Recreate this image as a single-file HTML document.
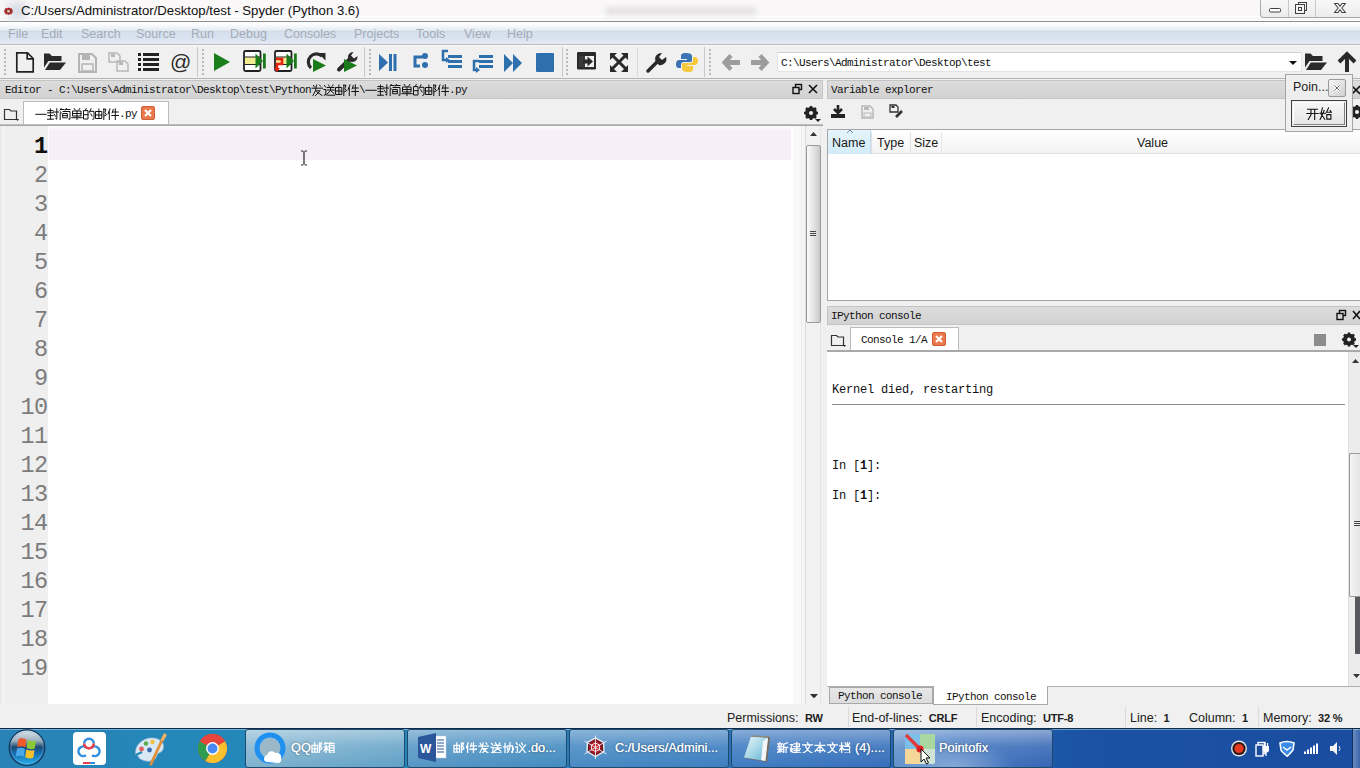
<!DOCTYPE html>
<html><head><meta charset="utf-8">
<style>
*{margin:0;padding:0;box-sizing:border-box}
html,body{width:1360px;height:768px;overflow:hidden;background:#f0f0f0;font-family:"Liberation Sans",sans-serif;position:relative}
.a{position:absolute}
.mono{font-family:"Liberation Mono",monospace}
.serif{font-family:"Liberation Serif",serif}
.nw{white-space:nowrap}
.ln{position:absolute;left:0;width:47.5px;margin-top:1px;text-align:right;font-family:"Liberation Mono",monospace;font-size:23.5px;letter-spacing:-0.6px;color:#7c7c7c;line-height:29px}
.dt{line-height:14px;font-family:"Liberation Mono",monospace;font-size:11px;letter-spacing:-0.6px;color:#101010;white-space:nowrap}
.cj{display:inline-block;font-size:12px;letter-spacing:0;vertical-align:top;overflow:hidden;height:14px;line-height:14px;white-space:nowrap}
.grip{position:absolute;width:2px;background:repeating-linear-gradient(#b9b9b9 0 2px,transparent 2px 4px)}
.sep{position:absolute;width:1px;background:#c8c8c8;top:47px;height:30px}
.st{position:absolute;top:711px;font-size:12.5px;color:#202020;white-space:nowrap}
.st b{font-weight:bold;margin-left:3px;font-size:11px;letter-spacing:-0.2px}
.tb{position:absolute;top:729px;height:39px;border:1px solid #1e4a6e;border-radius:3px;background:linear-gradient(180deg,rgba(255,255,255,.45),rgba(255,255,255,.12) 50%,rgba(255,255,255,.05));}
.tbt{position:absolute;top:740px;font-size:12.8px;color:#fff;white-space:nowrap;text-shadow:0 0 3px rgba(0,0,0,.45),0 0 .4px #fff}
</style></head><body>
<svg width="0" height="0" style="position:absolute;left:0;top:0"><defs><symbol id="g21457" viewBox="0 0 12 12"><path d="M2.5 1.5L3.5 3 M8.5 1L9.5 2.2 M1 4.2H11.5 M5.5 1L4.5 6.5L2 11.5 M4.8 6.8H9.2L4.5 11.5 M5.8 7.8L11 11.5"/></symbol><symbol id="g36865" viewBox="0 0 12 12"><path d="M1.5 1.5L2.5 3 M0.8 5.5H2.8V10L1 11.5 M2.5 10.8C5 11.3 8 11.3 11.5 11.3 M5.5 1L6.3 2.3 M10 1L9.2 2.3 M4.2 3.5H11 M4.2 6H11.3 M7.6 3.5V6.5L4.3 9.8 M7.6 6.5L11 9.5"/></symbol><symbol id="g37038" viewBox="0 0 12 12"><path d="M1 3.5H6.8V10.5H1Z M1 7H6.8 M3.9 1V10.5 M8.8 1V11.8 M8.8 1.2H11L9.9 4.5L11.5 6.8L9.5 7.8"/></symbol><symbol id="g20214" viewBox="0 0 12 12"><path d="M3 0.8L1 5.8 M2.3 3.8V11.8 M6.2 1.5L5.2 4.8 M5.6 4H11.2 M4.8 7.5H11.7 M8.3 0.8V11.8"/></symbol><symbol id="g19968" viewBox="0 0 12 12"><path d="M0.8 6.3H11.2"/></symbol><symbol id="g23553" viewBox="0 0 12 12"><path d="M0.8 2.6H6 M3.4 1V4.8 M0.6 4.8H6.2 M1 7.6H6 M3.4 6V11 M0.4 11.2H6.4 M6.4 4H11.6 M9.8 0.8V11.2L8.8 10.6 M7.3 6.3L8.5 8.3"/></symbol><symbol id="g31616" viewBox="0 0 12 12"><path d="M2.2 0.4L1 2.2 M1.8 1.5H5 M7.4 0.4L6.2 2.2 M7 1.5H11 M1.5 3.8L2.2 5 M1.2 5V11.8 M4 3.5H11V11.3L9.8 11 M4.2 5.5H8.3V9.8H4.2Z M4.2 7.6H8.3"/></symbol><symbol id="g21333" viewBox="0 0 12 12"><path d="M3.2 0.5L4.2 2 M8.8 0.5L7.8 2 M2 3H10V8H2Z M2 5.5H10 M6 3V11.8 M0.8 9.7H11.2"/></symbol><symbol id="g30340" viewBox="0 0 12 12"><path d="M3.2 0.5L2.5 2.3 M1 2.6H5V11H1Z M1 6.7H5 M8 0.8L6.5 4.2 M7 3.3H11V10.8L9.8 11.3 M7.8 5.8L9 8"/></symbol><symbol id="g24320" viewBox="0 0 12 12"><path d="M1.5 2H10.5 M0.8 6H11.2 M4.6 2V7.2L2 11.7 M8 2V11.7"/></symbol><symbol id="g22987" viewBox="0 0 12 12"><path d="M3.2 0.8L1.8 6.2L5.3 11.3 M0.8 5.8H6 M4.8 3.2L1 11.5 M8.8 0.8L7 4.8H11.3L10.3 3.3 M7.2 7H11V11.2H7.2Z"/></symbol><symbol id="g31665" viewBox="0 0 12 12"><path d="M2.2 0.4L1 2.2 M1.8 1.5H5 M7.4 0.4L6.2 2.2 M7 1.5H11 M0.5 5H5 M2.8 3.3V11.8 M2.8 5.6L0.5 9.5 M2.8 5.6L5 8.5 M6.3 3.6H11V11.5H6.3Z M6.3 6.2H11 M6.3 8.8H11"/></symbol><symbol id="g21327" viewBox="0 0 12 12"><path d="M0.5 5H4.3 M2.5 1.5V11.8 M5 4H10.3V10.8L9 10.3 M7.8 0.8L7.3 7L5 11 M5.6 6L5 8.2 M11 6L11.7 8.2"/></symbol><symbol id="g35758" viewBox="0 0 12 12"><path d="M1.2 0.9L2.4 2.5 M0.5 5H2.5V10L1 11.5 M6.8 1L7.8 3 M4.5 3L11.2 11.5 M10.8 3L4 11.5"/></symbol><symbol id="g26032" viewBox="0 0 12 12"><path d="M3 0.3V1.5 M0.8 2H5.6 M1.8 3L2.4 4.5 M4.6 3L4 4.5 M0.4 5H6 M1 7.5H5.6 M3 5V11.8 M3 8L0.6 11 M3 8L5.4 10 M11 0.8L7 2.3V10.8L6.4 11.8 M7 5.5H11.6 M9.4 5.5V11.8"/></symbol><symbol id="g24314" viewBox="0 0 12 12"><path d="M5 2H10.3V4.8H4.6 M4.4 7H11.2 M5 9H10.4 M7.6 0.4V10.4 M0.8 2.8H3.2L1 7H3.5L1.6 10 M1.3 8.2C2.5 10.8 4 11.3 11.6 11.3"/></symbol><symbol id="g25991" viewBox="0 0 12 12"><path d="M5.8 0.4L6.6 2 M0.8 3H11.2 M3.4 3C4.6 7 7 9.8 11.2 11.6 M8.6 3C7.4 7 5 9.8 0.8 11.6"/></symbol><symbol id="g26412" viewBox="0 0 12 12"><path d="M0.8 3.6H11.2 M6 0.4V11.8 M6 3.8L0.8 9.8 M6 3.8L11.2 9.8 M3.4 8.8H8.6"/></symbol><symbol id="g26723" viewBox="0 0 12 12"><path d="M0.4 4H5 M2.8 0.8V11.8 M2.8 5L0.4 9 M2.8 5L5 8 M6.4 1L7.4 3 M11 1L10 3 M8.8 0.4V4 M6 4.6H11V11.4H6 M6 8H11"/></symbol></defs></svg>

<!-- ============ TITLE BAR ============ -->
<div class="a" style="left:0;top:0;width:1360px;height:22px;background:linear-gradient(#faf8f8 0,#f9f7f7 15px,#fdfdfd 16px,#fdfdfd 17px,#f6f5f5 18px,#fbfbfb 20px);border-bottom:1px solid #8e8e8e"></div>
<div class="a" style="left:606px;top:7px;width:150px;height:8px;background:#e4e2e2;filter:blur(2.5px)"></div>
<div class="a" style="left:8px;top:2px;width:18px;height:18px;background:#d8dde6;filter:blur(4px)"></div>
<svg class="a" style="left:3px;top:6px" width="11" height="10" viewBox="0 0 11 10"><ellipse cx="5.5" cy="5.2" rx="4.2" ry="3.4" fill="#c23a3a"/><path d="M1.5 5.2H9.5M5.5 1.8V8.6M2.5 3L8.5 7.4M2.5 7.4L8.5 3" stroke="#6a2020" stroke-width=".8"/><circle cx="5.5" cy="5.2" r="1.3" fill="#f0d0d0"/></svg>
<div class="a nw" style="left:21px;top:3px;font-size:13.2px;color:#111">C:/Users/Administrator/Desktop/test - Spyder (Python 3.6)</div>
<!-- window buttons -->
<div class="a" style="left:1260px;top:-1px;width:101px;height:19px;border:1px solid #a8a8a8;border-top:none;border-radius:0 0 0 4px;background:linear-gradient(#f8f8f8,#ececec)"></div>
<div class="a" style="left:1288px;top:0;width:1px;height:17px;background:#c8c8c8"></div>
<div class="a" style="left:1315px;top:0;width:1px;height:17px;background:#c8c8c8"></div>
<svg class="a" style="left:1262px;top:0" width="98" height="18" viewBox="0 0 98 18">
 <rect x="7.5" y="8.5" width="11" height="3.5" rx="1" fill="#fff" stroke="#404040" stroke-width="1"/>
 <rect x="36.5" y="2.5" width="8" height="8" fill="none" stroke="#404040"/>
 <rect x="33.5" y="4.5" width="9" height="9" fill="#f4f4f4" stroke="#404040"/>
 <rect x="36.5" y="7.5" width="3" height="3" fill="none" stroke="#404040"/>
 <path d="M72.5 3.5H76L78 6.3L80 3.5H83.5L79.8 8L83.5 12.5H80L78 9.7L76 12.5H72.5L76.2 8Z" fill="#f6f6f6" stroke="#404040" stroke-width="1.1" stroke-linejoin="round"/>
</svg>

<!-- ============ MENU BAR ============ -->
<div class="a" style="left:0;top:22px;width:1360px;height:23px;background:linear-gradient(#fdfeff 0,#f9fbfd 3px,#e7ecf2 8px,#d2dbe6 9.5px,#d6e0ee 10.5px,#dae3f0 17px,#e4e7f1 20px,#e6e8f2 22px);border-bottom:1px solid #b6bcc8"></div>
<div class="a nw" style="left:8px;top:27px;font-size:12.5px;color:#a4abb7;word-spacing:0">
<span class="a" style="left:0">File</span><span class="a" style="left:33px">Edit</span><span class="a" style="left:73px">Search</span><span class="a" style="left:128px">Source</span><span class="a" style="left:183px">Run</span><span class="a" style="left:222px">Debug</span><span class="a" style="left:276px">Consoles</span><span class="a" style="left:346px">Projects</span><span class="a" style="left:408px">Tools</span><span class="a" style="left:456px">View</span><span class="a" style="left:499px">Help</span>
</div>

<!-- ============ TOOLBAR ============ -->
<div class="a" style="left:0;top:45px;width:1360px;height:34px;background:linear-gradient(#fbfbfb 0,#f0f0f0 2px);border-bottom:1px solid #b4b4b4"></div>
<div class="grip" style="left:4px;top:49px;height:26px"></div>
<div class="sep" style="left:197px"></div>
<div class="grip" style="left:202px;top:49px;height:26px"></div>
<div class="sep" style="left:364px"></div>
<div class="grip" style="left:369px;top:49px;height:26px"></div>
<div class="sep" style="left:562px"></div>
<div class="grip" style="left:566px;top:49px;height:26px"></div>
<div class="sep" style="left:637px;background:#dadada"></div>
<div class="sep" style="left:704px"></div>
<div class="grip" style="left:709px;top:49px;height:26px"></div>
<!-- ICONS -->
<svg class="a" style="left:0;top:45px" width="1360" height="34" viewBox="0 45 1360 34">
 <!-- new -->
 <path d="M16.8 52.8H27.5L33.2 58.5V71.8H16.8Z" fill="none" stroke="#222" stroke-width="1.7"/>
 <path d="M27.2 53V58.8H33" fill="none" stroke="#222" stroke-width="1.7"/>
 <!-- open -->
 <path d="M44 53.5H49.5L52 56H61.5V61H48.5L44 67.5Z" fill="#2a2a2a"/>
 <path d="M49.8 62.5H66L60 70H45Z" fill="#2a2a2a"/>
 <!-- save gray -->
 <path d="M79 54H92L96 58V72H79Z" fill="none" stroke="#b4b4b4" stroke-width="2"/>
 <rect x="82" y="55" width="8" height="5" fill="#b4b4b4"/>
 <rect x="82" y="64" width="11" height="7" fill="none" stroke="#b4b4b4" stroke-width="1.5"/>
 <!-- save all gray -->
 <path d="M109 53H117L120 56V62H109Z" fill="none" stroke="#b8b8b8" stroke-width="1.5"/>
 <path d="M117 61H125L128 64V71H117Z" fill="none" stroke="#b8b8b8" stroke-width="1.5"/>
 <rect x="111" y="54" width="4" height="3" fill="#b8b8b8"/><rect x="119" y="62" width="4" height="3" fill="#b8b8b8"/>
 <!-- list -->
 <rect x="138" y="53" width="3" height="3" fill="#222"/><rect x="143" y="53" width="16" height="3" fill="#222"/>
 <rect x="138" y="58" width="3" height="3" fill="#222"/><rect x="143" y="58" width="16" height="3" fill="#222"/>
 <rect x="138" y="63" width="3" height="3" fill="#222"/><rect x="143" y="63" width="16" height="3" fill="#222"/>
 <rect x="138" y="68" width="3" height="3" fill="#222"/><rect x="143" y="68" width="16" height="3" fill="#222"/>
 <!-- @ -->
 <text x="170" y="69" font-family="Liberation Sans" font-size="21" fill="#2a2a2a">@</text>
 <!-- run -->
 <path d="M214 53L230 62L214 71Z" fill="#1a7f1a"/>
 <!-- run cell -->
 <rect x="244" y="51" width="16.5" height="20" rx="1.5" fill="#fff" stroke="#222" stroke-width="1.8"/>
 <rect x="245" y="57" width="14" height="7.5" fill="#f2ec90"/>
 <path d="M245 57H260M245 64.5H260" stroke="#222" stroke-width="1.2"/>
 <path d="M255.5 53.5L263 61L255.5 68.5Z" fill="#1a7a1a"/><rect x="263" y="53.5" width="2.8" height="15" fill="#1a7a1a"/>
 <!-- run cell advance -->
 <rect x="275" y="51" width="16.5" height="20" rx="1.5" fill="#fff" stroke="#222" stroke-width="1.8"/>
 <rect x="276" y="57" width="14" height="7.5" fill="#f2ec90"/>
 <path d="M276 57H291M276 64.5H291" stroke="#222" stroke-width="1.2"/>
 <path d="M276 59H282V64H277V70" fill="none" stroke="#e82010" stroke-width="2.6"/><path d="M274 68L277 72L280 68Z" fill="#e82010"/>
 <path d="M286.5 53.5L294 61L286.5 68.5Z" fill="#1a7a1a"/><rect x="294" y="53.5" width="2.8" height="15" fill="#1a7a1a"/>
 <!-- rerun -->
 <path d="M322 56A8 8 0 1 0 311 68" fill="none" stroke="#2a2a2a" stroke-width="3.2"/>
 <path d="M318 53H325.5V60.5Z" fill="#2a2a2a"/>
 <path d="M313 59L326 65.5L313 72Z" fill="#1a7a1a"/>
 <!-- config run -->
 <path d="M339 69.5L350 59" stroke="#2a2a2a" stroke-width="4" stroke-linecap="round"/>
 <path d="M348 59A5.5 5.5 0 0 1 353.5 52L351 55.5L354 58.5L357.5 56A5.5 5.5 0 0 1 351 62Z" fill="#2a2a2a"/>
 <path d="M344 59L357 65.5L344 72Z" fill="#1a7a1a"/>
 <!-- debug -->
 <path d="M379 54L388 62.5L379 71Z" fill="#2e6fad"/><rect x="389" y="54" width="3" height="17" fill="#2e6fad"/><rect x="393.5" y="54" width="3" height="17" fill="#2e6fad"/>
 <!-- step -->
 <path d="M423 57H415V66H420" fill="none" stroke="#2e6fad" stroke-width="3"/>
 <circle cx="425" cy="56" r="3" fill="#2e6fad"/><circle cx="425" cy="65" r="3" fill="#2e6fad"/>
 <!-- step into -->
 <path d="M448 51H443V60H447" fill="none" stroke="#2e6fad" stroke-width="2.5"/><path d="M446 57L450 60L446 63Z" fill="#2e6fad"/>
 <rect x="448" y="55" width="14" height="3" fill="#2e6fad"/><rect x="448" y="60" width="14" height="3" fill="#2e6fad"/><rect x="448" y="65" width="14" height="3" fill="#2e6fad"/>
 <!-- step return -->
 <rect x="479" y="55" width="14" height="3" fill="#2e6fad"/><rect x="479" y="60" width="14" height="3" fill="#2e6fad"/><rect x="479" y="65" width="14" height="3" fill="#2e6fad"/>
 <path d="M479 61H474V70H477" fill="none" stroke="#2e6fad" stroke-width="2.5"/><path d="M476 67L480 70L476 73Z" fill="#2e6fad"/>
 <!-- continue -->
 <path d="M504 54L513 63L504 72Z M513 54L522 63L513 72Z" fill="#2e6fad"/>
 <!-- stop -->
 <rect x="536" y="53" width="18" height="19" rx="1" fill="#2e6fad"/>
 <!-- maximize pane -->
 <rect x="577" y="52" width="19" height="17.5" rx="1.2" fill="#2a2a2a"/>
 <rect x="579" y="56" width="15" height="11" fill="#f0f0f0"/>
 <rect x="579" y="56" width="6" height="11" fill="#3a3a3a"/>
 <path d="M583 59.5H587.5V56.5L593 61.5L587.5 66.5V63.5H583Z" fill="#2a2a2a"/>
 <!-- fullscreen -->
 <path d="M612 55L626 69M626 55L612 69" stroke="#2a2a2a" stroke-width="3"/>
 <path d="M610 53H617L610 60Z M628 53H621L628 60Z M610 72H617L610 65Z M628 72H621L628 65Z" fill="#2a2a2a"/>
 <!-- wrench -->
 <path d="M648 71L658 61" stroke="#2a2a2a" stroke-width="3.5" stroke-linecap="round"/>
 <path d="M656 62A6 6 0 0 1 662 53L659 57L662 60L666 57A6 6 0 0 1 659 65Z" fill="#2a2a2a"/>
 <!-- python -->
 <path d="M686 53C681 53 681 55 681 57V59H687V60H679C677 60 676 62 676 64C676 67 677 68 679 68H681V65C681 63 682 62 684 62H690C692 62 692 61 692 59V56C692 54 690 53 686 53Z" fill="#3a74b4"/>
 <path d="M688 72C693 72 693 70 693 68V66H687V65H695C697 65 698 63 698 61C698 58 697 57 695 57H693V60C693 62 692 63 690 63H684C682 63 682 64 682 66V69C682 71 684 72 688 72Z" fill="#f5c93a"/>
 <!-- back/forward -->
 <path d="M731 55.5L724.5 62.5L731 69.5" fill="none" stroke="#9c9c9c" stroke-width="4.2" stroke-linejoin="miter"/><rect x="726" y="60" width="14" height="5" fill="#9c9c9c"/>
 <path d="M760 55.5L766.5 62.5L760 69.5" fill="none" stroke="#9c9c9c" stroke-width="4.2" stroke-linejoin="miter"/><rect x="751" y="60" width="14" height="5" fill="#9c9c9c"/>
 <!-- folder open right -->
 <path d="M1305 53.5H1310.5L1313 56H1322.5V61H1309.5L1305 67.5Z" fill="#2a2a2a"/>
 <path d="M1310.8 62.5H1327L1321 70H1306Z" fill="#2a2a2a"/>
 <!-- up -->
 <path d="M1347 72V56M1339 62L1347 54L1355 62" stroke="#2a2a2a" stroke-width="4" fill="none"/>
</svg>
<!-- path combo -->
<div class="a" style="left:777px;top:52px;width:525px;height:20px;background:#fff;border:1px solid #e4e4e4;border-top-color:#cfcfcf"></div>
<div class="a dt" style="left:781px;top:56px;font-size:11px">C:\Users\Administrator\Desktop\test</div>
<svg class="a" style="left:1288px;top:60px" width="10" height="6"><path d="M1 1H9L5 5Z" fill="#111"/></svg>

<!-- ============ LEFT DOCK: EDITOR ============ -->
<div class="a" style="left:0;top:80px;width:823px;height:19px;background:linear-gradient(#dcdcdc,#d2d2d2);border:1px solid #c4c4c4;border-left:none"></div>
<div class="a dt" style="left:5px;top:83px">Editor - C:\Users\Administrator\Desktop\test\Python<svg width="48" height="12" style="display:inline-block;vertical-align:top;position:relative;top:0.5px" fill="none" stroke="#111" stroke-width="1" stroke-linecap="square"><use href="#g21457" x="0" y="0" width="12" height="12"/><use href="#g36865" x="12" y="0" width="12" height="12"/><use href="#g37038" x="24" y="0" width="12" height="12"/><use href="#g20214" x="36" y="0" width="12" height="12"/></svg>\<svg width="84" height="12" style="display:inline-block;vertical-align:top;position:relative;top:0.5px" fill="none" stroke="#111" stroke-width="1" stroke-linecap="square"><use href="#g19968" x="0" y="0" width="12" height="12"/><use href="#g23553" x="12" y="0" width="12" height="12"/><use href="#g31616" x="24" y="0" width="12" height="12"/><use href="#g21333" x="36" y="0" width="12" height="12"/><use href="#g30340" x="48" y="0" width="12" height="12"/><use href="#g37038" x="60" y="0" width="12" height="12"/><use href="#g20214" x="72" y="0" width="12" height="12"/></svg>.py</div>
<svg class="a" style="left:792px;top:83px" width="26" height="13" viewBox="0 0 26 13">
 <rect x="3.5" y="1.5" width="6" height="5" fill="none" stroke="#111" stroke-width="1.4"/>
 <rect x="1" y="4.5" width="6" height="6" fill="#d6d6d6" stroke="#111" stroke-width="1.4"/>
 <path d="M17 2L25 10M25 2L17 10" stroke="#111" stroke-width="1.6"/>
</svg>
<!-- tab bar -->
<div class="a" style="left:0;top:99px;width:823px;height:27px;background:#f0f0f0"></div>
<svg class="a" style="left:3px;top:106px" width="17" height="17" viewBox="0 0 17 17"><path d="M1.5 3.5H6.5L8 5H13.5V13.5H1.5Z" fill="none" stroke="#333" stroke-width="1.2"/><path d="M13 13L16 13L14.5 15Z" fill="#222"/></svg>
<div class="a" style="left:23px;top:101px;width:146px;height:25px;background:#fff;border:1px solid #bcbcbc;border-bottom:none"></div>
<div class="a dt" style="left:35px;top:107px"><svg width="84" height="12" style="display:inline-block;vertical-align:top;position:relative;top:1px" fill="none" stroke="#111" stroke-width="1" stroke-linecap="square"><use href="#g19968" x="0" y="0" width="12" height="12"/><use href="#g23553" x="12" y="0" width="12" height="12"/><use href="#g31616" x="24" y="0" width="12" height="12"/><use href="#g21333" x="36" y="0" width="12" height="12"/><use href="#g30340" x="48" y="0" width="12" height="12"/><use href="#g37038" x="60" y="0" width="12" height="12"/><use href="#g20214" x="72" y="0" width="12" height="12"/></svg>.py</div>
<div class="a" style="left:141px;top:106px;width:14px;height:14px;background:#e97a4d;border:1px solid #cf5e33;border-radius:2px"></div>
<svg class="a" style="left:141px;top:106px" width="14" height="14"><path d="M4 4L10 10M10 4L4 10" stroke="#fff" stroke-width="2.2"/></svg>
<svg class="a" style="left:803px;top:105px" width="18" height="18" viewBox="0 0 18 18"><g transform="translate(8 8)"><circle r="4.5" fill="none" stroke="#222" stroke-width="3"/><path d="M0 -7V7M-7 0H7M-5 -5L5 5M5 -5L-5 5" stroke="#222" stroke-width="2.5"/><circle r="2" fill="#f0f0f0"/></g><path d="M12 14H18L15 17Z" fill="#222"/></svg>
<!-- editor body -->
<div class="a" style="left:0;top:124px;width:823px;height:2px;background:linear-gradient(#c8c8c8,#9c9c9c)"></div>
<div class="a" style="left:0;top:126px;width:8px;height:578px;background:linear-gradient(90deg,#e4e4e4,#f3f3f3 30%,#ececec)"></div>
<div class="a" style="left:8px;top:126px;width:40px;height:578px;background:#efefef"></div>
<div class="a" style="left:48px;top:126px;width:745px;height:578px;background:#fff"></div>
<div class="a" style="left:49px;top:127px;width:742px;height:33px;background:linear-gradient(#fcf7fc,#f8eef8 12%,#f8eef8)"></div>
<!-- I-beam cursor -->
<svg class="a" style="left:299px;top:150px" width="10" height="16"><path d="M2 1H4M6 1H8M5 1V15M2 15H4M6 15H8" stroke="#222" stroke-width="1.2"/></svg>
<!-- line numbers -->
<div class="ln" style="top:131px;font-weight:bold;color:#111">1</div>
<div class="ln" style="top:160px">2</div>
<div class="ln" style="top:189px">3</div>
<div class="ln" style="top:218px">4</div>
<div class="ln" style="top:247px">5</div>
<div class="ln" style="top:276px">6</div>
<div class="ln" style="top:305px">7</div>
<div class="ln" style="top:334px">8</div>
<div class="ln" style="top:363px">9</div>
<div class="ln" style="top:392px">10</div>
<div class="ln" style="top:421px">11</div>
<div class="ln" style="top:450px">12</div>
<div class="ln" style="top:479px">13</div>
<div class="ln" style="top:508px">14</div>
<div class="ln" style="top:537px">15</div>
<div class="ln" style="top:566px">16</div>
<div class="ln" style="top:595px">17</div>
<div class="ln" style="top:624px">18</div>
<div class="ln" style="top:653px">19</div>
<!-- editor scrollbar -->
<div class="a" style="left:793px;top:126px;width:30px;height:578px;background:linear-gradient(90deg,#f8f8f8 0,#f8f8f8 8px,#ececec 8px,#ececec 9px,#f6f6f6 9px,#f6f6f6 27px,#f0f0f0 27px)"></div>
<div class="a" style="left:805px;top:126px;width:16px;height:578px;background:#f2f2f2;border-left:1px solid #dcdcdc;border-right:1px solid #e4e4e4"></div>
<svg class="a" style="left:809px;top:131px" width="9" height="6"><path d="M1 5L4.5 1L8 5Z" fill="#333"/></svg>
<div class="a" style="left:806px;top:145px;width:15px;height:178px;border:1px solid #9a9a9a;border-radius:2px;background:linear-gradient(90deg,#fafafa,#e6e6e6 45%,#c9c9c9)"></div>
<svg class="a" style="left:809px;top:230px" width="8" height="8"><path d="M1 1.5H7M1 3.5H7M1 5.5H7" stroke="#444" stroke-width="1"/></svg>
<svg class="a" style="left:809px;top:693px" width="9" height="6"><path d="M1 1L4.5 5L8 1Z" fill="#333"/></svg>

<!-- ============ RIGHT DOCK: VARIABLE EXPLORER ============ -->
<div class="a" style="left:823px;top:80px;width:4px;height:625px;background:#f0f0f0"></div>
<div class="a" style="left:827px;top:80px;width:533px;height:19px;background:linear-gradient(#dcdcdc,#d2d2d2);border:1px solid #c4c4c4;border-right:none"></div>
<div class="a dt" style="left:831px;top:83px">Variable explorer</div>
<svg class="a" style="left:828px;top:102px" width="80" height="20" viewBox="0 0 80 20">
 <path d="M10 3V10M6 7L10 11L14 7" stroke="#222" stroke-width="2.6" fill="none"/>
 <rect x="3" y="12" width="14" height="4" fill="#222"/>
 <path d="M34 4H42L45 7V16H34Z" fill="none" stroke="#b8b8b8" stroke-width="1.5"/><rect x="36" y="5" width="5" height="3" fill="#b8b8b8"/><rect x="36" y="11" width="7" height="4" fill="none" stroke="#b8b8b8"/>
 <path d="M62 3H68L70 5V10H62Z" fill="none" stroke="#333" stroke-width="1.3"/><rect x="63.5" y="4" width="3" height="2" fill="#333"/>
 <path d="M68 15L74 9" stroke="#333" stroke-width="2.6"/>
</svg>
<!-- table -->
<div class="a" style="left:827px;top:129px;width:533px;height:172px;background:#fff;border:1px solid #a6a6a6;border-right:none"></div>
<div class="a" style="left:828px;top:130px;width:532px;height:24px;background:linear-gradient(#ffffff,#f3f3f3);border-bottom:1px solid #e2e2e2"></div>
<div class="a" style="left:828px;top:130px;width:43px;height:24px;background:linear-gradient(#e6f4fb,#d3ecf8);border-right:1px solid #c4dcea"></div>
<div class="a" style="left:910px;top:132px;width:1px;height:21px;background:#e0e0e0"></div>
<div class="a" style="left:871px;top:132px;width:1px;height:21px;background:#e0e0e0"></div>
<div class="a" style="left:941px;top:132px;width:1px;height:21px;background:#e6e6e6"></div>
<svg class="a" style="left:846px;top:129px" width="8" height="5"><path d="M1 4L4 1L7 4" stroke="#6a8bb0" fill="none"/></svg>
<div class="a nw" style="left:832px;top:136px;font-size:12.5px;color:#1a1a1a">Name</div>
<div class="a nw" style="left:877px;top:136px;font-size:12.5px;color:#1a1a1a">Type</div>
<div class="a nw" style="left:914px;top:136px;font-size:12.5px;color:#1a1a1a">Size</div>
<div class="a nw" style="left:1137px;top:136px;font-size:12.5px;color:#1a1a1a">Value</div>

<!-- var explorer close/gear partially hidden -->
<svg class="a" style="left:1350px;top:84px" width="10" height="12"><path d="M2 2L10 10M10 2L2 10" stroke="#111" stroke-width="1.6"/></svg>
<svg class="a" style="left:1348px;top:104px" width="12" height="18" viewBox="0 0 12 18"><g transform="translate(9 8)"><circle r="4.5" fill="none" stroke="#222" stroke-width="3"/><path d="M0 -7V7M-7 0H7M-5 -5L5 5M5 -5L-5 5" stroke="#222" stroke-width="2.5"/><circle r="2" fill="#f0f0f0"/></g></svg>
<!-- POINTOFIX POPUP -->
<div class="a" style="left:1285px;top:74px;width:68px;height:58px;background:rgba(240,240,240,.93);border:1px solid #a4a4a4"></div>
<div class="a nw" style="left:1293px;top:80px;font-size:12.5px;color:#222">Poin...</div>
<div class="a" style="left:1328px;top:79px;width:18px;height:18px;border:1px solid #9a9a9a;border-radius:2px;background:linear-gradient(135deg,#f4f4f4,#d0d0d0)"></div>
<svg class="a" style="left:1333px;top:84px" width="8" height="8"><path d="M1.5 1.5L6.5 6.5M6.5 1.5L1.5 6.5" stroke="#fff" stroke-width="2.6"/><path d="M1.5 1.5L6.5 6.5M6.5 1.5L1.5 6.5" stroke="#666" stroke-width="1"/></svg>
<div class="a" style="left:1291px;top:100px;width:56px;height:27px;border:1px solid #404040;background:#f0f0f0"></div>
<div class="a" style="left:1293px;top:102px;width:52px;height:23px;border:1px solid #fff;border-right-color:#808080;border-bottom-color:#808080;background:linear-gradient(#f6f6f6,#e6e6e6)"></div>
<div class="a nw" style="left:1306px;top:107px;line-height:13px"><svg width="26" height="13" style="display:inline-block;vertical-align:top;position:relative;top:0px" fill="none" stroke="#111" stroke-width="1" stroke-linecap="square"><use href="#g24320" x="0" y="0" width="13" height="13"/><use href="#g22987" x="13" y="0" width="13" height="13"/></svg></div>

<!-- ============ IPYTHON CONSOLE ============ -->
<div class="a" style="left:827px;top:306px;width:533px;height:19px;background:linear-gradient(#dcdcdc,#d2d2d2);border:1px solid #c4c4c4;border-right:none"></div>
<div class="a dt" style="left:831px;top:309px">IPython console</div>
<svg class="a" style="left:1335px;top:309px" width="25" height="13" viewBox="0 0 25 13">
 <rect x="4.5" y="1.5" width="6" height="5" fill="none" stroke="#111" stroke-width="1.4"/>
 <rect x="2" y="4.5" width="6" height="6" fill="#d6d6d6" stroke="#111" stroke-width="1.4"/>
 <path d="M18 2L25 10M25 2L18 10" stroke="#111" stroke-width="1.6"/>
</svg>
<svg class="a" style="left:830px;top:332px" width="17" height="17" viewBox="0 0 17 17"><path d="M1.5 3.5H6.5L8 5H13.5V13.5H1.5Z" fill="none" stroke="#333" stroke-width="1.2"/><path d="M13 13L16 13L14.5 15Z" fill="#222"/></svg>
<div class="a" style="left:850px;top:327px;width:109px;height:24px;background:#fff;border:1px solid #bcbcbc;border-bottom:none"></div>
<div class="a dt" style="left:861px;top:333px">Console 1/A</div>
<div class="a" style="left:932px;top:332px;width:14px;height:14px;background:#e97a4d;border:1px solid #cf5e33;border-radius:2px"></div>
<svg class="a" style="left:932px;top:332px" width="14" height="14"><path d="M4 4L10 10M10 4L4 10" stroke="#fff" stroke-width="2.2"/></svg>
<div class="a" style="left:1314px;top:334px;width:12px;height:12px;background:#8c8c8c"></div>
<svg class="a" style="left:1340px;top:331px" width="20" height="18" viewBox="0 0 20 18"><g transform="translate(9 8.5)"><circle r="4.5" fill="none" stroke="#222" stroke-width="3"/><path d="M0 -7V7M-7 0H7M-5 -5L5 5M5 -5L-5 5" stroke="#222" stroke-width="2.5"/><circle r="2" fill="#f0f0f0"/></g><path d="M13 14H19L16 17Z" fill="#222"/></svg>
<div class="a" style="left:827px;top:350px;width:533px;height:2px;background:#a9a9a9"></div>
<div class="a" style="left:827px;top:352px;width:533px;height:334px;background:#fff"></div>
<div class="a mono nw" style="left:832px;top:383px;font-size:12px;letter-spacing:-0.2px;color:#111">Kernel died, restarting</div>
<div class="a" style="left:832px;top:404px;width:513px;height:1px;background:#8a8a8a"></div>
<div class="a mono nw" style="left:832px;top:459px;font-size:12px;letter-spacing:-0.2px;color:#111">In [<b>1</b>]:</div>
<div class="a mono nw" style="left:832px;top:489px;font-size:12px;letter-spacing:-0.2px;color:#111">In [<b>1</b>]:</div>
<!-- console scrollbar -->
<div class="a" style="left:1348px;top:352px;width:12px;height:334px;background:#ececec;border-left:1px solid #e0e0e0"></div>
<svg class="a" style="left:1351px;top:358px" width="9" height="6"><path d="M1 5L4.5 1L8 5Z" fill="#333"/></svg>
<div class="a" style="left:1349px;top:453px;width:12px;height:144px;border:1px solid #9a9a9a;border-right:none;border-radius:2px 0 0 2px;background:linear-gradient(90deg,#f4f4f4,#e4e4e4)"></div>
<svg class="a" style="left:1353px;top:520px" width="7" height="8"><path d="M1 1.5H7M1 3.5H7M1 5.5H7" stroke="#444" stroke-width="1"/></svg>
<div class="a" style="left:1355px;top:597px;width:5px;height:57px;background:#55575c"></div>
<svg class="a" style="left:1352px;top:673px" width="8" height="6"><path d="M1 1L4.5 5L8 1Z" fill="#333"/></svg>
<!-- bottom tabs -->
<div class="a" style="left:827px;top:686px;width:533px;height:19px;background:#f0f0f0;border-top:1px solid #b0b0b0"></div>
<svg class="a" style="left:810px;top:693px" width="9" height="6"><path d="M1 1L4.5 5L8 1Z" fill="#333"/></svg>
<div class="a" style="left:829px;top:687px;width:104px;height:17px;background:linear-gradient(#e8e8e8,#dcdcdc);border:1px solid #a8a8a8"></div>
<div class="a dt" style="left:838px;top:689px">Python console</div>
<div class="a" style="left:933px;top:686px;width:115px;height:19px;background:#fff;border:1px solid #a8a8a8;border-top:none"></div>
<div class="a dt" style="left:946px;top:690px">IPython console</div>

<!-- ============ STATUS BAR ============ -->
<div class="a" style="left:0;top:705px;width:1360px;height:23px;background:#f0f0f0"></div>
<div class="a" style="left:848px;top:707px;width:1px;height:20px;background:#dadada"></div>
<div class="a" style="left:976px;top:707px;width:1px;height:20px;background:#dadada"></div>
<div class="a" style="left:1125px;top:707px;width:1px;height:20px;background:#dadada"></div>
<div class="a" style="left:1258px;top:707px;width:1px;height:20px;background:#dadada"></div>
<div class="st" style="left:727px">Permissions: <b>RW</b></div>
<div class="st" style="left:852px">End-of-lines: <b>CRLF</b></div>
<div class="st" style="left:981px">Encoding: <b>UTF-8</b></div>
<div class="st" style="left:1130px">Line: <b>1</b></div>
<div class="st" style="left:1189px">Column: <b>1</b></div>
<div class="st" style="left:1263px">Memory: <b>32 %</b></div>

<!-- ============ TASKBAR ============ -->
<div class="a" style="left:0;top:728px;width:1360px;height:40px;background:linear-gradient(90deg,#2a82b6 0%,#2388b9 15%,#2785b8 30%,#2b7ab6 45%,#2a6cb3 60%,#2160ae 72%,#1b52a4 80%,#1a4c9f 100%);border-top:1px solid #0f2a48"></div>
<div class="a" style="left:0;top:729px;width:1360px;height:1px;background:rgba(170,215,240,.55)"></div>
<!-- start orb -->
<svg class="a" style="left:7px;top:728px" width="40" height="40" viewBox="0 0 40 40">
 <defs>
  <linearGradient id="orb" x1="0" y1="0" x2="0" y2="1"><stop offset="0" stop-color="#dfe6ec"/><stop offset=".3" stop-color="#9fb2c2"/><stop offset=".48" stop-color="#1e4a72"/><stop offset=".62" stop-color="#1466a8"/><stop offset="1" stop-color="#2ab4f0"/></linearGradient>
 </defs>
 <circle cx="20" cy="19.7" r="17.8" fill="url(#orb)" stroke="#16385c" stroke-width="1.2"/>
 <circle cx="20" cy="19.7" r="16.2" fill="none" stroke="#7fb8e0" stroke-width=".7" opacity=".6"/>
 <path d="M11.5 11Q15 9.5 19.5 11.5L18.3 19.3Q14.5 17.5 10.2 19Z" fill="#f05a28"/>
 <path d="M20.8 12Q25 14 29 12.5L27.8 20.5Q23.8 22 19.6 20Z" fill="#8cc83a"/>
 <path d="M10 20.5Q14 19 18 21L16.8 28.5Q13 27 8.8 28.3Z" fill="#48a8e8"/>
 <path d="M19.3 21.5Q23.5 23.3 27.5 22L26.3 29.8Q22.3 31.3 18.2 29.3Z" fill="#f8c02a"/>
</svg>
<!-- baidu cloud -->
<div class="a" style="left:73px;top:732px;width:33px;height:33px;background:#fff;border-radius:4px"></div>
<svg class="a" style="left:73px;top:732px" width="33" height="33" viewBox="0 0 33 33">
 <path d="M13.6 15.8A4.8 4.8 0 1 0 13 23.2" fill="none" stroke="#2f8fe0" stroke-width="2.5"/>
 <path d="M18.4 15.8A4.8 4.8 0 1 1 19 23.2" fill="none" stroke="#2f8fe0" stroke-width="2.5"/>
 <path d="M11.2 11.5A4.8 4.8 0 0 1 20.8 11.5" fill="none" stroke="#2f8fe0" stroke-width="2.5"/>
 <path d="M20.8 11.5A4.8 4.8 0 0 1 11.2 11.5" fill="none" stroke="#e8404a" stroke-width="2.7"/>
 <rect x="10" y="30" width="7" height="2" fill="#e8404a"/><rect x="17" y="30" width="5" height="2" fill="#2f8fe0"/>
</svg>
<!-- paint -->
<svg class="a" style="left:133px;top:731px" width="36" height="36" viewBox="0 0 36 36">
 <path d="M3 24C1 15 9 7 19 7C27 7 32 12 30 18C29 22 25 21 24 24C23 28 19 31 13 30C9 29 6 28 5 25C4 24 4 24 3 24Z" fill="#d8e8f4" stroke="#a8c0d4" stroke-width=".8"/>
 <path d="M3 24L9 21" stroke="#1f86b5" stroke-width="2"/>
 <circle cx="8.5" cy="18" r="2.4" fill="#e06060"/><circle cx="13" cy="12.5" r="2.3" fill="#5aac4c"/><circle cx="19.5" cy="11" r="2.3" fill="#f0c040"/><circle cx="16.5" cy="19" r="2.4" fill="#3a68b0"/>
 <path d="M18 33L29 9" stroke="#e0903a" stroke-width="2.8" stroke-linecap="round"/><path d="M27.5 9L31 2L34 4L30.5 10Z" fill="#f0b060"/>
</svg>
<!-- chrome -->
<svg class="a" style="left:197px;top:733px" width="31" height="31" viewBox="0 0 31 31">
 <circle cx="15.5" cy="15.5" r="14.5" fill="#e8453c"/>
 <path d="M15.5 15.5L28.06 8.25A14.5 14.5 0 0 1 8.25 28.06Z" fill="#fbc02d"/>
 <path d="M15.5 15.5L8.25 28.06A14.5 14.5 0 0 1 2.94 8.25Z" fill="#2e9e4e"/>
 <path d="M15.5 15.5L2.94 8.25A14.5 14.5 0 0 1 28.06 8.25Z" fill="#e8453c"/>
 <circle cx="15.5" cy="15.5" r="6.5" fill="#fff"/><circle cx="15.5" cy="15.5" r="5" fill="#4a8af4"/>
</svg>
<!-- task buttons -->
<div class="tb" style="left:245px;width:160px;background:linear-gradient(180deg,rgba(255,255,255,.5),rgba(255,255,255,.25) 45%,rgba(255,255,255,.12)),linear-gradient(90deg,#6ea8c8,#4a93be)"></div>
<div class="tb" style="left:407px;width:160px;background:linear-gradient(180deg,rgba(255,255,255,.4),rgba(255,255,255,.15) 45%,rgba(255,255,255,.05)),linear-gradient(90deg,#4f92c2,#3a86bd)"></div>
<div class="tb" style="left:569px;width:160px;background:linear-gradient(180deg,rgba(255,255,255,.4),rgba(255,255,255,.15) 45%,rgba(255,255,255,.05)),linear-gradient(90deg,#3f85c0,#3378bd)"></div>
<div class="tb" style="left:731px;width:160px;background:linear-gradient(180deg,rgba(255,255,255,.4),rgba(255,255,255,.15) 45%,rgba(255,255,255,.05)),linear-gradient(90deg,#3676bf,#2c68b8)"></div>
<div class="tb" style="left:893px;width:160px;background:linear-gradient(180deg,rgba(255,255,255,.45),rgba(255,255,255,.15) 45%,rgba(255,255,255,.05)),linear-gradient(90deg,#5a8cc8,#3a72bf 40%,#2c5fb0)"></div>
<div class="a" style="left:895px;top:730px;width:156px;height:37px;border-radius:3px;background:radial-gradient(ellipse 60px 30px at 60px 40px,rgba(255,255,255,.38),rgba(255,255,255,0))"></div>
<!-- QQ mail icon -->
<svg class="a" style="left:254px;top:732px" width="34" height="34" viewBox="0 0 34 34">
 <circle cx="16" cy="16" r="13" fill="none" stroke="#1f8ff0" stroke-width="5"/>
 <circle cx="16" cy="16" r="10" fill="#9bb8c8"/>
 <path d="M13 30C9 30 9 24 13 23C14 19 19 18 21 21C25 20 28 23 27 26C28 29 26 31 24 31Z" fill="#fff"/>
</svg>
<!-- word icon -->
<svg class="a" style="left:417px;top:732px" width="32" height="30" viewBox="0 0 32 30">
 <rect x="18" y="4" width="11" height="22" fill="#fff" stroke="#bcd" stroke-width=".5"/>
 <path d="M20 8H27M20 11H27M20 14H27M20 17H27M20 20H27" stroke="#2b579a" stroke-width="1.2"/>
 <path d="M1 5L19 1V30L1 26Z" fill="#2b579a"/>
 <text x="3" y="21" font-family="Liberation Sans" font-weight="bold" font-size="12" fill="#fff">W</text>
</svg>
<!-- spyder icon -->
<svg class="a" style="left:583px;top:735px" width="25" height="25" viewBox="0 0 25 25">
 <defs><radialGradient id="spy" cx="50%" cy="50%" r="50%"><stop offset="0" stop-color="#e02424"/><stop offset=".55" stop-color="#b01c22"/><stop offset="1" stop-color="#3a1a30"/></radialGradient></defs>
 <path d="M12.5 3L20.5 7.5L21 16.5L12.5 21.5L4 16.5L4.5 7.5Z" fill="url(#spy)" stroke="#f4f4f4" stroke-width="1.3"/>
 <path d="M12.5 0.5V24M1.5 6L23.5 19M1.5 19L23.5 6" stroke="#eef" stroke-width="1" opacity=".9"/>
 <path d="M12.5 8L16.5 10L16.5 14.5L12.5 16.5L8.5 14.5L8.5 10Z" fill="none" stroke="#f4f4f4" stroke-width=".9"/>
</svg>
<!-- notepad icon -->
<svg class="a" style="left:742px;top:733px" width="32" height="32" viewBox="0 0 32 32">
 <defs><linearGradient id="np" x1="0" y1="0" x2="1" y2="1"><stop offset="0" stop-color="#e8f6fa"/><stop offset=".5" stop-color="#a8d8e8"/><stop offset="1" stop-color="#5ab0d0"/></linearGradient></defs>
 <path d="M10 3L28 4L25 29L2 25Z" fill="#7a6a58"/>
 <path d="M9 3.5L26 4.5L23 28L2 24.5Z" fill="url(#np)"/>
 <path d="M21 8L26 5L23.5 28L19 27Z" fill="#f2f6f8"/>
 <path d="M9 3L26 4" stroke="#8a8a80" stroke-width="1.6"/>
</svg>
<!-- pointofix icon -->
<svg class="a" style="left:903px;top:732px" width="34" height="34" viewBox="0 0 34 34">
 <rect x="2" y="2" width="30" height="30" rx="2" fill="#cfe4d4"/>
 <rect x="2" y="17" width="15" height="15" fill="#f6d79a"/><rect x="17" y="2" width="15" height="15" fill="#a8d8a0"/><rect x="2" y="2" width="15" height="15" fill="#7cc0ea"/>
 <path d="M3 3L17 17" stroke="#e03a3a" stroke-width="3.4"/>
 <circle cx="17" cy="17" r="3.6" fill="#e02020"/>
 <path d="M18 17V30L21 27L23.5 32L25.5 31L23 26H27Z" fill="#fff" stroke="#111" stroke-width="1"/>
</svg>
<div class="tbt" style="left:291px">QQ<svg width="24.8" height="11.6" style="display:inline-block;vertical-align:top;position:relative;top:1.8px" fill="none" stroke="#fff" stroke-width="1.3" stroke-linecap="square"><use href="#g37038" x="0" y="0" width="11.6" height="11.6"/><use href="#g31665" x="12.4" y="0" width="11.6" height="11.6"/></svg></div>
<div class="tbt" style="left:453px"><svg width="74.4" height="11.6" style="display:inline-block;vertical-align:top;position:relative;top:1.8px" fill="none" stroke="#fff" stroke-width="1.3" stroke-linecap="square"><use href="#g37038" x="0" y="0" width="11.6" height="11.6"/><use href="#g20214" x="12.4" y="0" width="11.6" height="11.6"/><use href="#g21457" x="24.8" y="0" width="11.6" height="11.6"/><use href="#g36865" x="37.2" y="0" width="11.6" height="11.6"/><use href="#g21327" x="49.6" y="0" width="11.6" height="11.6"/><use href="#g35758" x="62" y="0" width="11.6" height="11.6"/></svg>.do...</div>
<div class="tbt" style="left:615px">C:/Users/Admini...</div>
<div class="tbt" style="left:777px"><svg width="74.4" height="11.6" style="display:inline-block;vertical-align:top;position:relative;top:1.8px" fill="none" stroke="#fff" stroke-width="1.3" stroke-linecap="square"><use href="#g26032" x="0" y="0" width="11.6" height="11.6"/><use href="#g24314" x="12.4" y="0" width="11.6" height="11.6"/><use href="#g25991" x="24.8" y="0" width="11.6" height="11.6"/><use href="#g26412" x="37.2" y="0" width="11.6" height="11.6"/><use href="#g25991" x="49.6" y="0" width="11.6" height="11.6"/><use href="#g26723" x="62" y="0" width="11.6" height="11.6"/></svg> (4)....</div>
<div class="tbt" style="left:939px">Pointofix</div>
<!-- tray -->
<svg class="a" style="left:1225px;top:734px" width="130" height="30" viewBox="0 0 130 30">
 <circle cx="14" cy="14.5" r="8" fill="#e8e8e8"/><circle cx="14" cy="14.5" r="6.6" fill="#2a1a1a"/><circle cx="14" cy="14.5" r="4.6" fill="#e83a20"/>
 <rect x="33" y="8.5" width="7" height="11" fill="#1c4c9c" stroke="#fff" stroke-width="1.4"/>
 <rect x="31" y="11" width="7" height="11" fill="#1c4c9c" stroke="#fff" stroke-width="1.4"/>
 <path d="M38 12H44V16Q44 18.5 41 18.5Q38 18.5 38 16Z" fill="#fff"/><path d="M39.5 9V12M42.5 9V12M41 18V22" stroke="#fff" stroke-width="1.3"/>
 <path d="M55 9Q62 6 69 9L68 16Q62 23 62 22Q56 17 56 16Z" fill="#3a8ae8" stroke="#fff" stroke-width="1.6"/>
 <path d="M58 13L62 16L66 13" stroke="#fff" stroke-width="1.5" fill="none"/>
 <rect x="79" y="17.5" width="2" height="2.5" fill="#fff"/><rect x="82" y="15.5" width="2" height="4.5" fill="#fff"/><rect x="85" y="13.5" width="2" height="6.5" fill="#fff"/><rect x="88" y="11.5" width="2" height="8.5" fill="#fff"/><rect x="91" y="9.5" width="2" height="10.5" fill="#fff"/>
 <path d="M105 12H108L112 8V21L108 17H105Z" fill="#f4f4f4"/><path d="M114 12Q116 14.5 114 17" stroke="#e0e0e0" stroke-width="1" fill="none"/>
</svg>
<div class="a" style="left:1352px;top:729px;width:8px;height:39px;border-left:1px solid #0f2f60;background:linear-gradient(90deg,rgba(255,255,255,.35),rgba(255,255,255,.15))"></div>
</body></html>
